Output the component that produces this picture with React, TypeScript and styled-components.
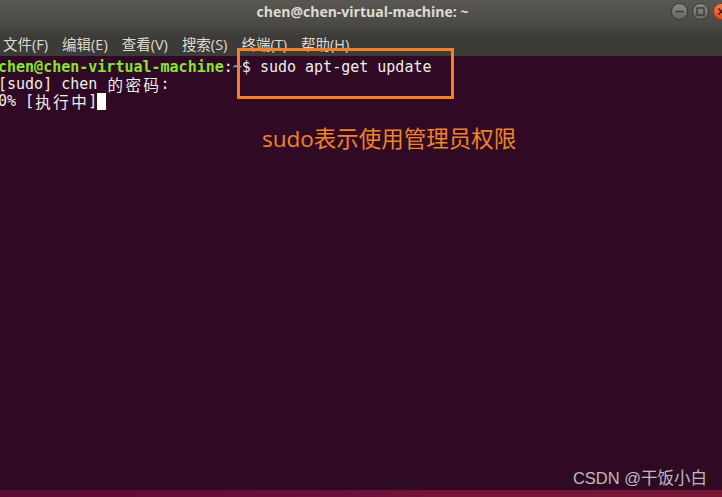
import React from "react";
import styled, { createGlobalStyle } from "styled-components";

const Global = createGlobalStyle`
  html, body { margin: 0; padding: 0; background: #300a24; overflow: hidden; }
  #root { width: 722px; height: 497px; }
`;

const Window = styled.div`
  position: relative;
  width: 722px;
  height: 497px;
  display: flex;
  flex-direction: column;
  overflow: hidden;
  background: #300a24;
`;

const TitleBar = styled.div`
  height: 25px;
  flex: none;
  display: flex;
  align-items: center;
  justify-content: center;
  position: relative;
  background: linear-gradient(#5a5853, #4a4945);
`;

const Title = styled.div`
  font-family: "Open Sans", "Liberation Sans", sans-serif;
  font-weight: 700;
  font-size: 14px;
  color: #dfdbd2;
  padding-left: 3px;
  margin-top: -2px;
`;

const Controls = styled.div`
  position: absolute;
  right: -8px;
  top: 3px;
  display: flex;
  gap: 4px;
`;

const Btn = styled.div<{ $close?: boolean }>`
  width: 17px;
  height: 17px;
  border-radius: 50%;
  box-sizing: border-box;
  border: 1px solid ${(p) => (p.$close ? "#9a3a1a" : "#3a3936")};
  background: ${(p) =>
    p.$close
      ? "linear-gradient(#f77a4f, #e4491c)"
      : "linear-gradient(#8a8984, #66655f)"};
  display: flex;
  align-items: center;
  justify-content: center;
`;

const MenuBar = styled.div`
  height: 31px;
  flex: none;
  display: flex;
  align-items: center;
  gap: 14px;
  padding-left: 3px;
  padding-top: 5px;
  box-sizing: border-box;
  background: linear-gradient(#4a4945, #3c3b37 40%, #3c3b37);
`;

const MenuItem = styled.span`
  font-family: "Open Sans", "Noto Sans CJK SC", sans-serif;
  font-size: 14.5px;
  color: #dfdbd2;
`;

const Terminal = styled.div`
  flex: 1;
  padding: 3px 0 0 0;
  margin-left: -2px;
  font-family: "DejaVu Sans Mono", "Liberation Mono", monospace;
  font-size: 15px;
  line-height: 17px;
  color: #eeeeec;
  white-space: pre;
`;

const Line = styled.div`
  height: 17px;
  display: flex;
  align-items: center;
`;

const Seg = styled.span<{ $c?: string; $bold?: boolean }>`
  color: ${(p) => p.$c || "#eeeeec"};
  font-weight: ${(p) => (p.$bold ? 700 : 400)};
  display: inline-block;
`;

const Wide = styled.span`
  display: inline-block;
  width: 18px;
  height: 17px;
  text-align: center;
  font-family: "Noto Sans CJK SC", sans-serif;
  font-size: 15.5px;
  line-height: 17px;
`;

const Cursor = styled.span`
  display: inline-block;
  width: 9px;
  height: 17px;
  background: #ffffff;
`;

const BottomBand = styled.div`
  height: 7px;
  flex: none;
  background: linear-gradient(90deg, #5a0a33, #6c0f3a 50%, #761437 60%, #771535);
`;

const Highlight = styled.div`
  position: absolute;
  left: 237px;
  top: 48px;
  width: 217px;
  height: 51px;
  box-sizing: border-box;
  border: 3px solid #f3802a;
`;

const Note = styled.div`
  position: absolute;
  left: 262px;
  top: 122px;
  font-family: "Noto Sans CJK SC", sans-serif;
  font-size: 22.5px;
  line-height: 30px;
  color: #f0822c;
`;

const Latin = styled.span`
  font-family: "Open Sans", "Noto Sans CJK SC", sans-serif;
`;

const Watermark = styled.div`
  position: absolute;
  right: 15px;
  bottom: 8px;
  font-family: "Liberation Sans", "Noto Sans CJK SC", sans-serif;
  font-size: 16.5px;
  color: rgba(225, 225, 225, 0.82);
`;

const wide = (s: string) =>
  s.split("").map((ch, i) => <Wide key={i}>{ch}</Wide>);

export default function App() {
  return (
    <>
      <Global />
      <Window>
        <TitleBar>
          <Title>chen@chen-virtual-machine: ~</Title>
          <Controls>
            <Btn>
              <svg width="9" height="9" viewBox="0 0 9 9">
                <rect x="0.5" y="3.8" width="8" height="1.6" fill="#3a3935" />
              </svg>
            </Btn>
            <Btn>
              <svg width="9" height="9" viewBox="0 0 9 9">
                <rect x="1" y="1" width="7" height="7" fill="none" stroke="#3a3935" strokeWidth="1.4" />
              </svg>
            </Btn>
            <Btn $close>
              <svg width="9" height="9" viewBox="0 0 9 9">
                <path d="M1.5 1.5 L7.5 7.5 M7.5 1.5 L1.5 7.5" stroke="#3b1a10" strokeWidth="1.5" />
              </svg>
            </Btn>
          </Controls>
        </TitleBar>
        <MenuBar>
          <MenuItem>文件(F)</MenuItem>
          <MenuItem>编辑(E)</MenuItem>
          <MenuItem>查看(V)</MenuItem>
          <MenuItem>搜索(S)</MenuItem>
          <MenuItem>终端(T)</MenuItem>
          <MenuItem>帮助(H)</MenuItem>
        </MenuBar>
        <Terminal>
          <Line>
            <Seg $c="#8ae234" $bold>chen@chen-virtual-machine</Seg>
            <Seg>:</Seg>
            <Seg $c="#729fcf" $bold>~</Seg>
            <Seg>$ sudo apt-get update</Seg>
          </Line>
          <Line>
            <Seg>[sudo] chen </Seg>
            {wide("的密码")}
            <Seg>:</Seg>
          </Line>
          <Line>
            <Seg>0% [</Seg>
            {wide("执行中")}
            <Seg>]</Seg>
            <Cursor />
          </Line>
        </Terminal>
        <BottomBand />
        <Highlight />
        <Note>
          <Latin>sudo</Latin>表示使用管理员权限
        </Note>
        <Watermark>CSDN @干饭小白</Watermark>
      </Window>
    </>
  );
}
